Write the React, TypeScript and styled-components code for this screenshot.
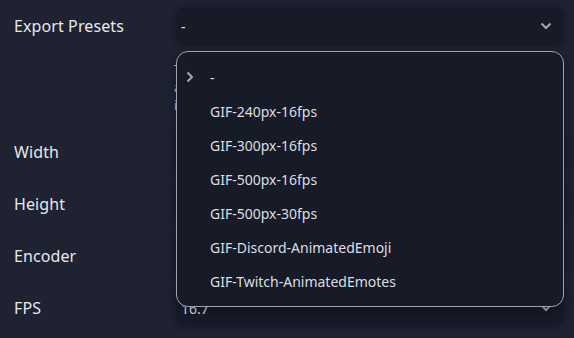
import React from 'react'
import styled, { createGlobalStyle } from 'styled-components'

const GlobalStyle = createGlobalStyle`
	html, body {
		margin: 0;
		padding: 0;
		background: #1e2231;
	}
	body {
		font-family: 'Noto Sans', 'Open Sans', sans-serif;
		color: #e4e6ea;
		overflow: hidden;
	}
`

const Page = styled.div`
	width: 574px;
	height: 338px;
	box-sizing: border-box;
	padding: 7px 10px 0 14px;
	display: flex;
	flex-direction: column;
	gap: 14px;
	background: #1e2231;
`

const Row = styled.div`
	display: grid;
	grid-template-columns: 162px 388px;
	align-items: start;
`

const Label = styled.div`
	font-size: 16px;
	line-height: 38px;
	height: 38px;
	color: #e6e8ec;
	letter-spacing: 0.1px;
`

const Field = styled.div`
	position: relative;
	display: flex;
	flex-direction: column;
`

const Box = styled.div`
	height: 38px;
	box-sizing: border-box;
	display: flex;
	align-items: center;
	justify-content: space-between;
	padding: 0 12px 0 5px;
	background: #161b27;
	border-radius: 9px;
	box-shadow: 0 0 6px rgba(10, 12, 20, 0.35);
	font-size: 14px;
	color: #dfe1e6;
`

const Description = styled.div`
	margin: 16px 0 4px -2px;
	font-size: 12px;
	line-height: 18px;
	color: #b8bcc6;
	white-space: nowrap;
`

const Menu = styled.div`
	position: absolute;
	top: 44px;
	left: 0;
	width: 388px;
	height: 256px;
	box-sizing: border-box;
	padding: 8px 0 0;
	background: #171b27;
	border: 1px solid #9fa3ad;
	border-radius: 12px;
	box-shadow: 0 4px 12px rgba(0, 0, 0, 0.3);
	z-index: 5;
`

const Item = styled.div`
	position: relative;
	height: 34px;
	display: flex;
	align-items: center;
	padding-left: 33px;
	font-size: 14px;
	color: #dcdee3;
`

const Check = styled.span`
	position: absolute;
	left: 8px;
	top: 11px;
	display: flex;
`

const ChevronDown = () => (
	<svg width="12" height="8" viewBox="0 0 12 8">
		<path d="M1.5 1.5 L6 6 L10.5 1.5" stroke="#a3a8b2" strokeWidth="2" fill="none" />
	</svg>
)

const ChevronRight = () => (
	<svg width="10" height="12" viewBox="0 0 10 12">
		<path d="M2.5 1.5 L7 6 L2.5 10.5" stroke="#a3a8b2" strokeWidth="2" fill="none" />
	</svg>
)

const presets = [
	'-',
	'GIF-240px-16fps',
	'GIF-300px-16fps',
	'GIF-500px-16fps',
	'GIF-500px-30fps',
	'GIF-Discord-AnimatedEmoji',
	'GIF-Twitch-AnimatedEmotes',
]

export default function App() {
	return (
		<>
			<GlobalStyle />
			<Page>
				<Row>
					<Label>Export Presets</Label>
					<Field>
						<Box>
							<span>-</span>
							<ChevronDown />
						</Box>
						<Description>
							Templates that fill in the size, encoder and frame rate.
							<br />
							applied on top of the current export settings, which
							<br />
							in turn can still be edited afterwards.
						</Description>
						<Menu>
							{presets.map((p, i) => (
								<Item key={p}>
									{i === 0 && (
										<Check>
											<ChevronRight />
										</Check>
									)}
									{p}
								</Item>
							))}
						</Menu>
					</Field>
				</Row>
				<Row>
					<Label>Width</Label>
					<Box>240</Box>
				</Row>
				<Row>
					<Label>Height</Label>
					<Box>240</Box>
				</Row>
				<Row>
					<Label>Encoder</Label>
					<Box>
						<span>GIF</span>
						<ChevronDown />
					</Box>
				</Row>
				<Row>
					<Label>FPS</Label>
					<Box>
						<span>16.7</span>
						<ChevronDown />
					</Box>
				</Row>
			</Page>
		</>
	)
}
